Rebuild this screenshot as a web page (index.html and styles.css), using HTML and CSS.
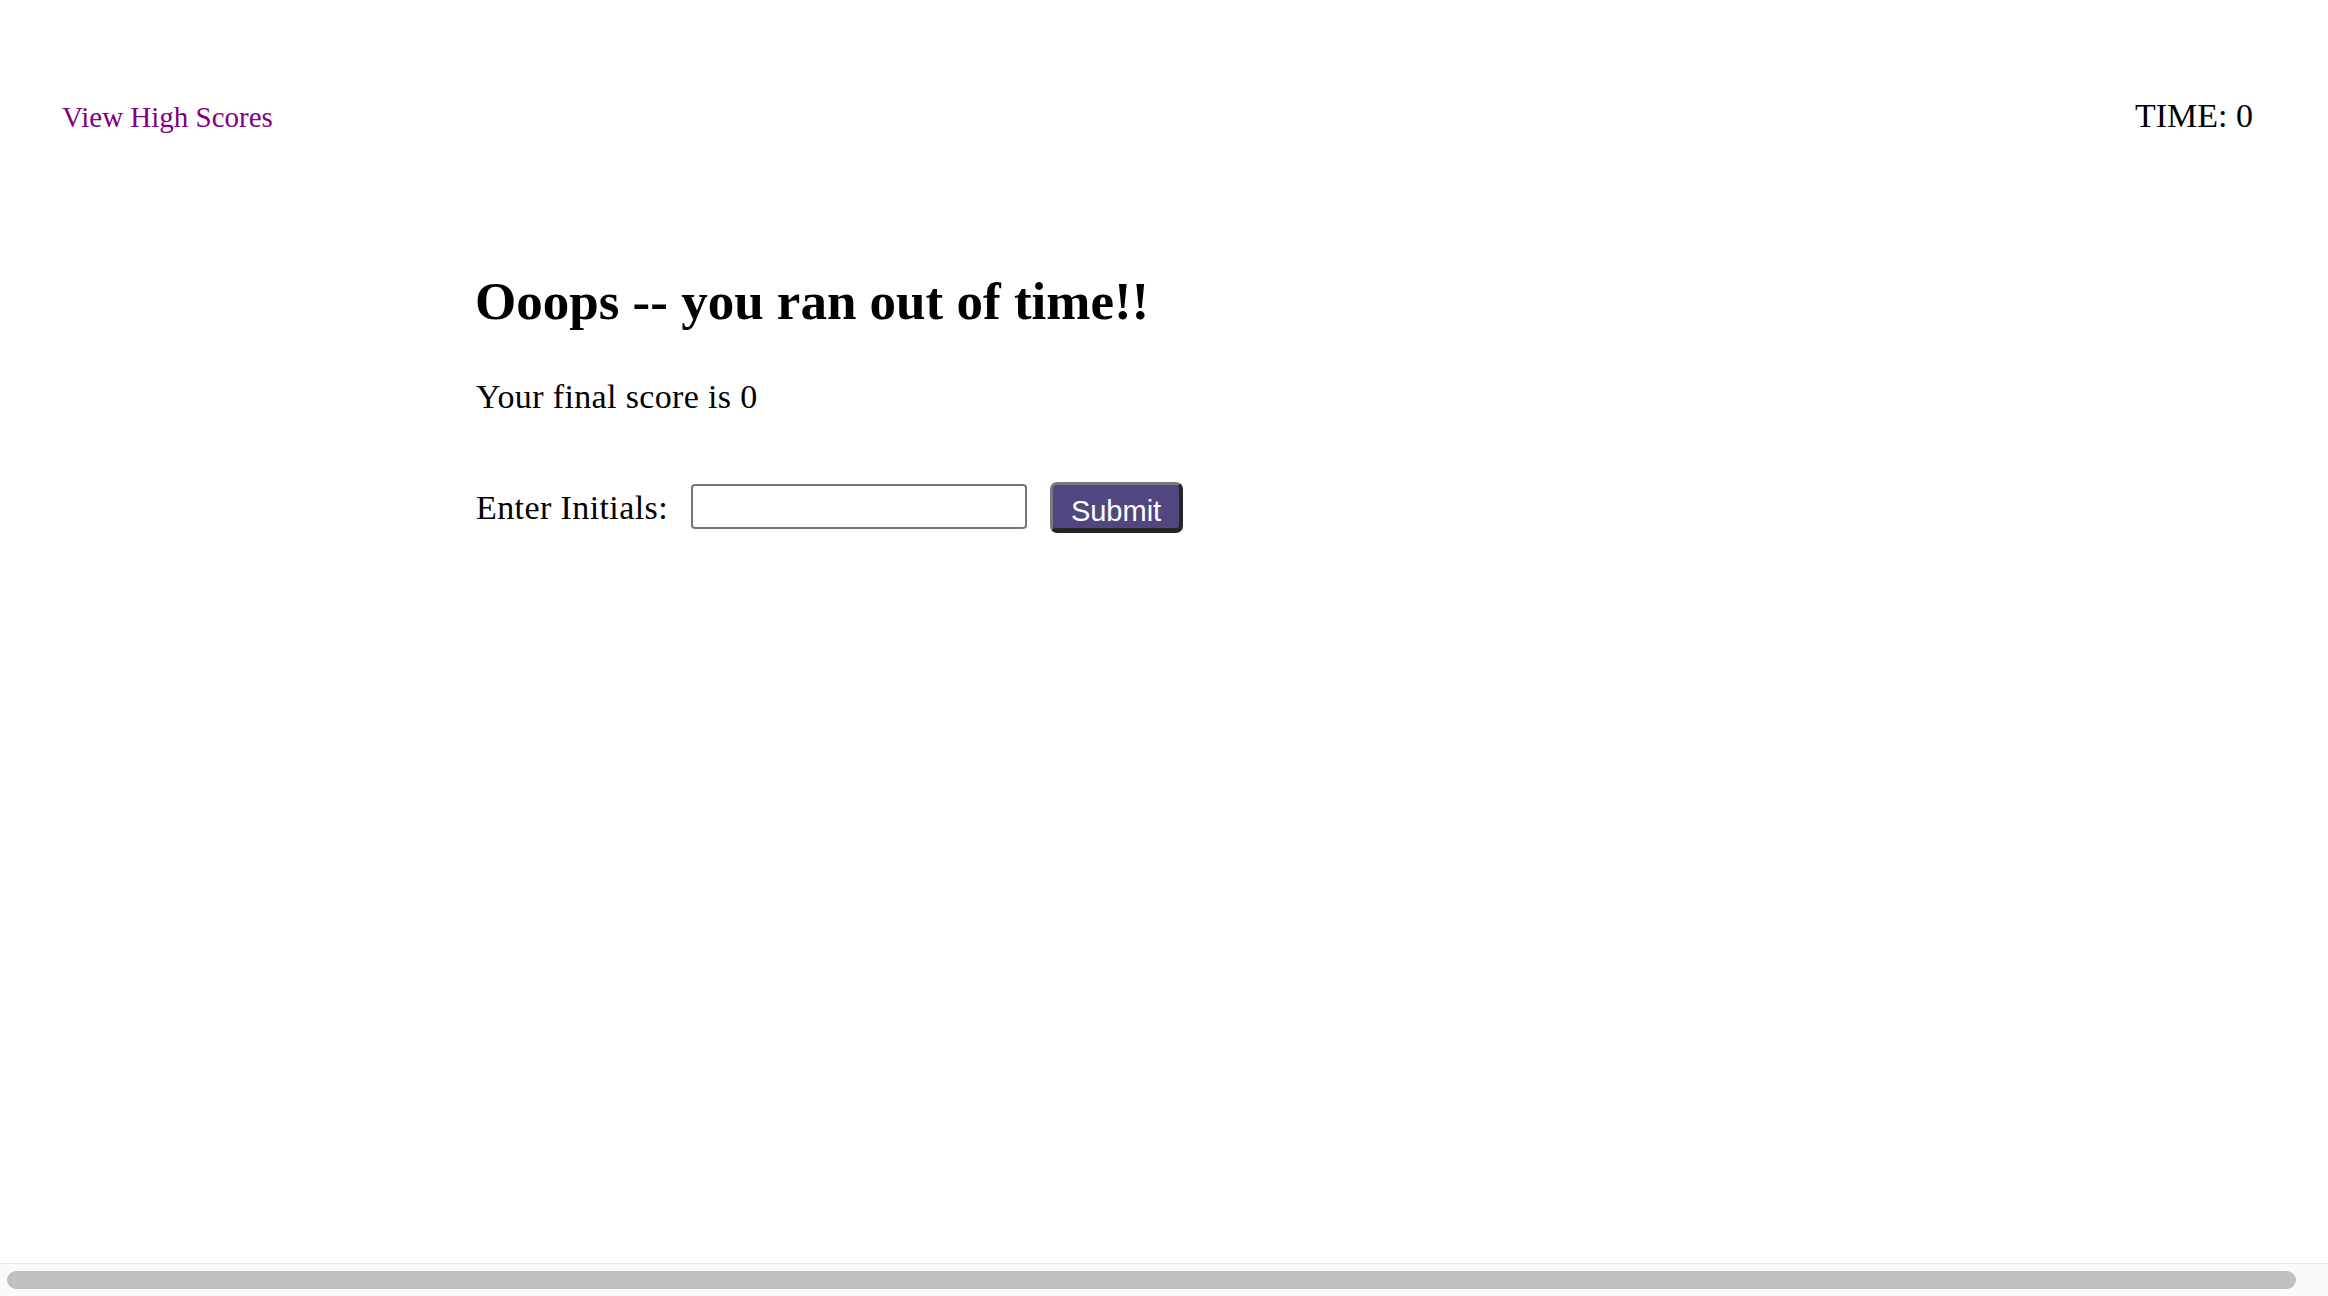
FILE: index.html
```html
<!DOCTYPE html>
<html lang="en">
<head>
<meta charset="utf-8">
<title>Code Quiz</title>
<link rel="stylesheet" href="styles.css">
</head>
<body>
<header class="top-bar">
  <a class="high-scores" href="#">View High Scores</a>
  <div class="timer">TIME: 0</div>
</header>
<main class="quiz">
  <h1 class="title">Ooops -- you ran out of time!!</h1>
  <p class="score">Your final score is 0</p>
  <form class="initials-form" onsubmit="return false">
    <label class="initials-label" for="initials">Enter Initials:</label>
    <input class="initials-input" id="initials" type="text">
    <button class="submit-btn" type="submit">Submit</button>
  </form>
</main>
<div class="scrollbar"><div class="scrollbar-thumb"></div></div>
</body>
</html>
```
FILE: styles.css
```css
html, body {
  margin: 0;
  padding: 0;
  background: #ffffff;
  overflow: hidden;
}
body {
  font-family: "Liberation Serif", "Times New Roman", serif;
  color: #000000;
  width: 2328px;
  height: 1296px;
}
.top-bar {
  display: flex;
  justify-content: space-between;
  align-items: baseline;
  padding: 96px 75px 0 62px;
  height: 40px;
}
.high-scores {
  font-size: 29px;
  line-height: 40px;
  color: #800080;
  text-decoration: none;
}
.timer {
  font-size: 34px;
  line-height: 40px;
}
.quiz {
  margin-left: 475px;
  padding-top: 2px;
}
.title {
  margin: 133px 0 0 0;
  font-size: 53px;
  line-height: 60px;
  font-weight: bold;
}
.score {
  margin: 46px 0 0 1px;
  font-size: 34px;
  line-height: 40px;
  letter-spacing: 0.35px;
}
.initials-form {
  display: flex;
  align-items: flex-start;
  margin: 65px 0 0 1px;
  height: 51px;
}
.initials-label {
  font-size: 34px;
  line-height: 51px;
  letter-spacing: 0.4px;
  margin-right: 23px;
}
.initials-input {
  box-sizing: border-box;
  width: 336px;
  height: 45px;
  margin-top: 2px;
  border: 2px solid #767676;
  border-radius: 4px;
  background: #ffffff;
  padding: 0 6px;
  margin-right: 23px;
}
.submit-btn {
  box-sizing: border-box;
  width: 133px;
  height: 51px;
  padding: 8px 0 0 0;
  background: #51467f;
  color: #ffffff;
  font-family: "Liberation Sans", Arial, sans-serif;
  font-size: 29px;
  line-height: 30px;
  border-style: solid;
  border-width: 3px 4px 5px 3px;
  border-color: #7a7a7a #262626 #262626 #7a7a7a;
  border-radius: 7px;
}
.scrollbar {
  position: fixed;
  left: 0;
  right: 0;
  bottom: 0;
  height: 32px;
  background: #fafafa;
  border-top: 1px solid #e8e8e8;
}
.scrollbar-thumb {
  position: absolute;
  left: 7px;
  top: 7px;
  width: 2289px;
  height: 18px;
  border-radius: 9px;
  background: #c1c1c1;
}
```
